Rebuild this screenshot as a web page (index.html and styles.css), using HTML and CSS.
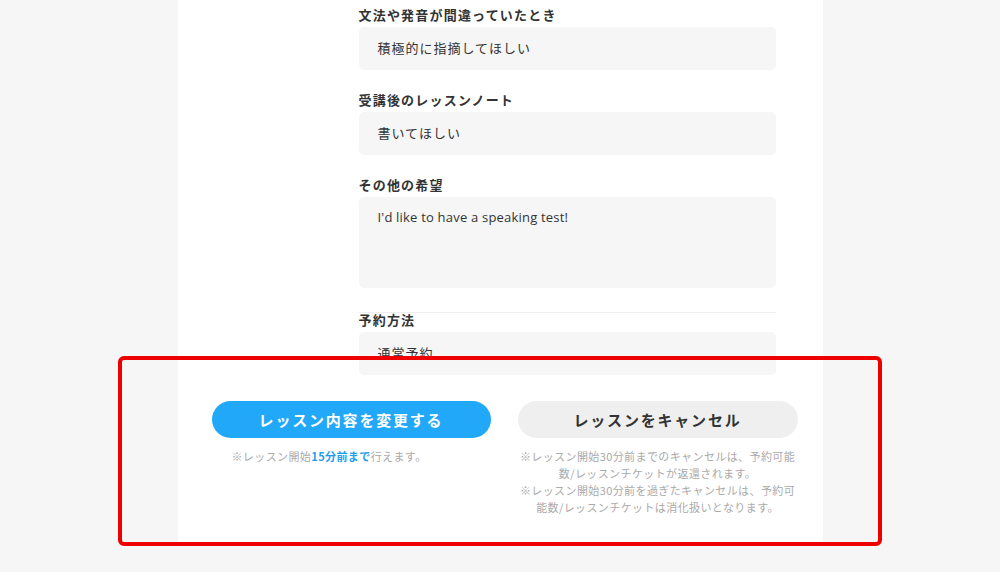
FILE: index.html
```html
<!DOCTYPE html>
<html lang="ja">
<head>
	<meta charset="UTF-8" />
	<meta name="viewport" content="width=device-width, initial-scale=1.0" />
	<title>レッスン詳細</title>
	<link rel="stylesheet" href="styles.css">
</head>
<body>
	<div class="card">
		<div class="form">
			<div class="field">
				<p class="field-label">文法や発音が間違っていたとき</p>
				<div class="field-box">積極的に指摘してほしい</div>
			</div>
			<div class="field">
				<p class="field-label">受講後のレッスンノート</p>
				<div class="field-box">書いてほしい</div>
			</div>
			<div class="field">
				<p class="field-label">その他の希望</p>
				<div class="field-box field-box-area">I'd like to have a speaking test!</div>
			</div>
			<div class="field field-sep">
				<p class="field-label">予約方法</p>
				<div class="field-box">通常予約</div>
			</div>
		</div>

		<div class="actions">
			<div class="action">
				<button class="btn btn-primary">レッスン内容を変更する</button>
				<p class="note note-left">※レッスン開始<em>15分前まで</em>行えます。</p>
			</div>
			<div class="action">
				<button class="btn btn-gray">レッスンをキャンセル</button>
				<p class="note">※レッスン開始30分前までのキャンセルは、予約可能<br>数/レッスンチケットが返還されます。<br>※レッスン開始30分前を過ぎたキャンセルは、予約可<br>能数/レッスンチケットは消化扱いとなります。</p>
			</div>
		</div>
	</div>

	<div class="highlight"></div>
</body>
</html>
```

FILE: styles.css
```css
*{padding: 0;margin: 0;box-sizing: border-box;}
body{
	background: #f6f6f7;
	font-family: "Noto Sans CJK JP", "Open Sans", sans-serif;
	color: #333;
	position: relative;
	height: 572px;
	overflow: hidden;
}
.card{
	width: 645px;
	margin: 0 auto;
	background: #fff;
	height: 542px;
	padding-top: 6px;
}
.form{padding-left: 181px;width: 598px;}
.field{margin-bottom: 21px;}
.field:last-child{margin-bottom: 0;}
.field-label{
	font-size: 13px;
	line-height: 18px;
	font-weight: bold;
	letter-spacing: 1.2px;
	margin-bottom: 3px;
}
.field-box{
	background: #f6f6f6;
	border-radius: 5px;
	height: 43px;
	padding: 0 19px;
	font-family: "Open Sans", "Noto Sans CJK JP", sans-serif;
	font-size: 13px;
	line-height: 43px;
	letter-spacing: 1px;
}
.field-box-area{
	height: 91px;
	line-height: 20px;
	padding-top: 10px;
	letter-spacing: 0.2px;
}
.field-sep{
	border-top: 1px solid #eee;
	margin-top: 24px;
}
.field-sep .field-label{margin-top: -2px;margin-bottom: 3px;}

.actions{
	display: grid;
	grid-template-columns: 279px 280px;
	column-gap: 27px;
	padding-left: 34px;
	margin-top: 26px;
}
.action{display: flex;flex-direction: column;align-items: center;}
.btn{
	width: 100%;
	height: 37px;
	border: none;
	border-radius: 19px;
	font-family: "Noto Sans CJK JP", sans-serif;
	font-size: 15px;
	font-weight: bold;
	letter-spacing: 1.8px;
}
.btn-primary{background: #22a8f8;color: #fff;}
.btn-gray{background: #efefef;color: #333;}
.note{
	margin-top: 10px;
	font-size: 11px;
	line-height: 17px;
	letter-spacing: 0.4px;
	color: #aaa;
	text-align: center;
	white-space: nowrap;
}
.note-left{margin-right: 44px;}
.note em{font-style: normal;font-weight: bold;color: #1f9ef0;}

.highlight{
	position: absolute;
	left: 118px;
	top: 356px;
	width: 764px;
	height: 190px;
	border: 4px solid #ee0000;
	border-radius: 6px;
}
```
